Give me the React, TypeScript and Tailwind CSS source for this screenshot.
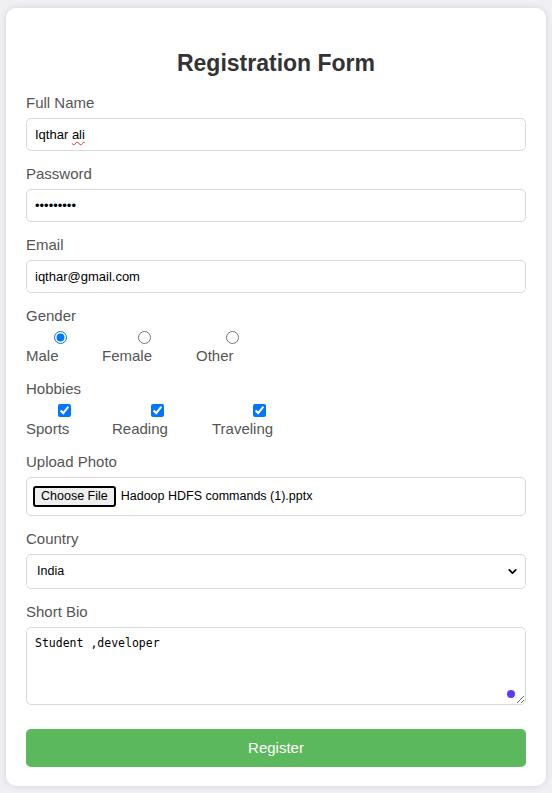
import React from "react";
import { ChevronDown } from "lucide-react";

const labelCls = "block text-[15px] leading-[18px] text-[#555]";
const inputCls =
  "mt-[6px] block w-full h-[33px] rounded-[5px] border border-[#d9d9d9] bg-white px-2 text-[13px] text-black outline-none";

export default function App() {
  return (
    <div
      className="min-h-[793px] bg-[#f0f0f4] px-[6px] pt-2 pb-[7px]"
      style={{ fontFamily: '"Liberation Sans", Arial, sans-serif' }}
    >
      <div className="rounded-[10px] bg-white px-5 pt-[41px] pb-[19px] shadow-[0_0_6px_rgba(0,0,0,0.12)]">
        <h2 className="mb-[17px] text-center text-[23px] font-bold leading-[28px] text-[#333]">
          Registration Form
        </h2>

        <label className={labelCls}>Full Name</label>
        <div className={inputCls + " flex items-center"}>
          <span>
            Iqthar{" "}
            <span className="underline decoration-wavy decoration-red-500 decoration-1 underline-offset-2">
              ali
            </span>
          </span>
        </div>

        <label className={labelCls + " mt-[14px]"}>Password</label>
        <input type="password" defaultValue="123456789" className={inputCls} />

        <label className={labelCls + " mt-[14px]"}>Email</label>
        <input type="email" defaultValue="iqthar@gmail.com" className={inputCls} />

        <label className={labelCls + " mt-[14px]"}>Gender</label>
        <div className="flex text-[15px] leading-[18px] text-[#555]">
          <div className="w-[76px]">
            <input type="radio" name="g" defaultChecked className="mt-[6px] ml-[28px] block h-[13px] w-[13px]" />
            <div className="mt-[3px]">Male</div>
          </div>
          <div className="w-[94px]">
            <input type="radio" name="g" className="mt-[6px] ml-[36px] block h-[13px] w-[13px]" />
            <div className="mt-[3px]">Female</div>
          </div>
          <div>
            <input type="radio" name="g" className="mt-[6px] ml-[30px] block h-[13px] w-[13px]" />
            <div className="mt-[3px]">Other</div>
          </div>
        </div>

        <label className={labelCls + " mt-[15px]"}>Hobbies</label>
        <div className="flex text-[15px] leading-[18px] text-[#555]">
          <div className="w-[86px]">
            <input type="checkbox" defaultChecked className="mt-[6px] ml-[32px] block h-[13px] w-[13px]" />
            <div className="mt-[3px]">Sports</div>
          </div>
          <div className="w-[100px]">
            <input type="checkbox" defaultChecked className="mt-[6px] ml-[39px] block h-[13px] w-[13px]" />
            <div className="mt-[3px]">Reading</div>
          </div>
          <div>
            <input type="checkbox" defaultChecked className="mt-[6px] ml-[41px] block h-[13px] w-[13px]" />
            <div className="mt-[3px]">Traveling</div>
          </div>
        </div>

        <label className={labelCls + " mt-[15px]"}>Upload Photo</label>
        <div className="mt-[6px] flex h-[39px] items-center rounded-[5px] border border-[#d9d9d9] bg-white pl-[6px] text-[12.5px] text-black">
          <button
            type="button"
            className="h-[21px] rounded-[3px] border-2 border-black bg-[#efefef] px-[6px] leading-none"
          >
            Choose File
          </button>
          <span className="ml-[5px]">Hadoop HDFS commands (1).pptx</span>
        </div>

        <label className={labelCls + " mt-[14px]"}>Country</label>
        <div className="relative mt-[6px]">
          <select
            defaultValue="India"
            className="block h-[35px] w-full appearance-none rounded-[5px] border border-[#d9d9d9] bg-white pl-[10px] text-[12.5px] text-black outline-none"
          >
            <option>India</option>
            <option>USA</option>
            <option>UK</option>
          </select>
          <ChevronDown
            size={13}
            strokeWidth={3.2}
            className="pointer-events-none absolute right-[7px] top-[11px] text-black"
          />
        </div>

        <label className={labelCls + " mt-[14px]"}>Short Bio</label>
        <div className="relative mt-[6px]">
          <textarea
            defaultValue="Student ,developer"
            className="block h-[78px] w-full rounded-[5px] border border-[#d9d9d9] bg-white px-2 py-2 text-[11.5px] leading-[15px] text-black outline-none"
            style={{ fontFamily: '"DejaVu Sans Mono", "Liberation Mono", monospace' }}
          />
          <span className="pointer-events-none absolute right-[11px] bottom-[7px] h-[8px] w-[8px] rounded-full bg-[#6236ff]" />
        </div>

        <button
          type="button"
          className="mt-6 block h-[38px] w-full rounded-[5px] bg-[#5cb85c] text-[15px] text-white"
        >
          Register
        </button>
      </div>
    </div>
  );
}
